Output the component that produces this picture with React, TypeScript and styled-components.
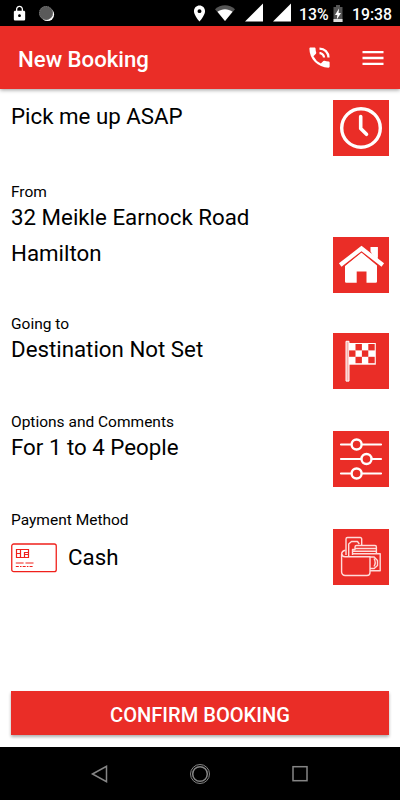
import React from 'react';
import styled, { createGlobalStyle } from 'styled-components';
import { MdLocationOn, MdLock, MdMenu, MdPhoneInTalk } from 'react-icons/md';

const RED = '#ea2d27';

const GlobalStyle = createGlobalStyle`
  * { box-sizing: border-box; }
  body { margin: 0; background: #fff; font-family: Roboto, sans-serif; color: #000; }
  svg { display: block; flex: none; }
`;

const Screen = styled.div`
  width: 400px;
  height: 800px;
  display: flex;
  flex-direction: column;
  overflow: hidden;
`;

const StatusBar = styled.header`
  height: 26px;
  flex: none;
  background: #000;
  color: #fff;
  display: flex;
  align-items: center;
  justify-content: space-between;
  padding: 0 9px 0 11px;
`;

const StatusGroup = styled.div`
  display: flex;
  align-items: center;
`;

const StatusItem = styled.span<{ $gap?: number }>`
  display: flex;
  margin-left: ${(p) => p.$gap ?? 0}px;
`;

const StatusText = styled.span<{ $gap: number; $width: number; $size: number }>`
  margin-left: ${(p) => p.$gap}px;
  width: ${(p) => p.$width}px;
  font-size: ${(p) => p.$size}px;
  line-height: 27px;
  height: 24px;
  font-weight: 500;
  white-space: nowrap;
`;

const AppBar = styled.nav`
  height: 63px;
  flex: none;
  background: ${RED};
  color: #fff;
  display: flex;
  align-items: center;
  padding: 0 13px 0 18px;
  box-shadow: 0 1px 4px rgba(0, 0, 0, 0.4);
`;

const Title = styled.h1`
  flex: 1;
  margin: 3px 0 0;
  font-size: 22.2px;
  font-weight: 500;
  line-height: 26px;
`;

const BarButton = styled.button<{ $gap?: number }>`
  border: 0;
  padding: 0;
  margin-left: ${(p) => p.$gap ?? 0}px;
  background: none;
  color: inherit;
  display: flex;
`;

const Main = styled.main`
  flex: 1;
  display: flex;
  flex-direction: column;
  padding: 11px 11px 12px;
`;

const Section = styled.section<{ $height: number; $gap?: number }>`
  height: ${(p) => p.$height}px;
  margin-top: ${(p) => p.$gap ?? 0}px;
  flex: none;
  display: flex;
  align-items: flex-end;
  justify-content: space-between;
`;

const Details = styled.div`
  align-self: stretch;
  display: flex;
  flex-direction: column;
`;

const Label = styled.span`
  font-size: 15.5px;
  line-height: 19px;
  margin-bottom: -2px;
`;

const Value = styled.span`
  font-size: 22.3px;
  line-height: 35.6px;
  white-space: nowrap;
`;

const AsapValue = styled(Value)`
  line-height: 33px;
`;

const Payment = styled.div`
  display: flex;
  align-items: center;
  gap: 11px;
  margin-top: 12px;
`;

const Tile = styled.button`
  width: 56px;
  height: 56px;
  border: 0;
  padding: 0;
  background: ${RED};
  color: #fff;
`;

const Confirm = styled.button`
  margin-top: auto;
  height: 44px;
  flex: none;
  border: 0;
  background: ${RED};
  color: #fff;
  font: 500 20.1px/24px Roboto, sans-serif;
  padding: 3px 0 0;
  box-shadow: 0 2px 3px rgba(0, 0, 0, 0.32);
`;

const NavBar = styled.footer`
  height: 53px;
  flex: none;
  background: #000;
  display: flex;
  align-items: center;
  justify-content: center;
  gap: 78px;
`;

const SyncDot = () => (
  <svg width="17" height="17" viewBox="0 0 17 17">
    <circle cx="9.5" cy="9.5" r="6.6" fill="#fff" />
    <circle cx="8" cy="8" r="7" fill="#5a5a5a" />
    <circle cx="8" cy="8" r="6.5" fill="none" stroke="#777" strokeWidth="1" strokeDasharray="1 1" />
  </svg>
);

const Wifi = () => (
  <svg width="20" height="16" viewBox="0 0 20 16">
    <path d="M0 4.2C5.4-1.2 14.6-1.2 20 4.2L10 16Z" fill="#555" />
    <path d="M2.5 6.7C6.8 3.3 13.2 3.3 17.5 6.7L10 16Z" fill="#fff" />
  </svg>
);

const Signal = () => (
  <svg width="18" height="20" viewBox="0 0 18 20">
    <path d="M0 18.5 18 .5V18.5Z" fill="#fff" />
  </svg>
);

const Battery = () => (
  <svg width="10" height="17" viewBox="0 0 10 17">
    <path d="M3 0h4v2h2.5v15H.5V2H3Z" fill="#555" />
    <path d="M.5 14h9v3h-9Z" fill="#ddd" />
    <path d="M6 3.5 2 10h2.3l-.5 4.5L8 8H5.6Z" fill="#fff" />
  </svg>
);

const Clock = () => (
  <svg width="56" height="56" viewBox="0 0 56 56" fill="none" stroke="#fff" strokeLinecap="round" strokeLinejoin="round">
    <circle cx="28" cy="28" r="19.3" strokeWidth="3.4" />
    <path d="M27.7 16.5V28.5L33.5 34.3" strokeWidth="3.6" />
  </svg>
);

const House = () => (
  <svg width="56" height="56" viewBox="0 0 56 56" fill="none">
    <path d="M12 29 28.5 15.5 44 28.5V44.5a1.3 1.3 0 0 1-1.3 1.3H33.5V34.5H23.7V45.8H13.3A1.3 1.3 0 0 1 12 44.5Z" fill="#fff" />
    <path d="M37.5 10H44.7V24L37.5 18Z" fill="#fff" />
    <path d="M7.5 28.2 28.5 11.5 49.5 28.2" stroke={RED} strokeWidth="6" />
    <path d="M7.2 28 28.5 11.5 49.8 28" stroke="#fff" strokeWidth="4.2" />
    <path d="M38.5 10H44.7V22.5L38.5 17Z" fill="#fff" />
  </svg>
);

const FLAG_CELLS = [[22.5, 11], [35.3, 11], [16.1, 17.4], [28.9, 17.4], [22.5, 23.8], [35.3, 23.8]];

const Flag = () => (
  <svg width="56" height="56" viewBox="0 0 56 56">
    <path d="M13 8.3h3v39.8h-3Z" fill="#f8b1ae" stroke="#fff" strokeWidth="1" />
    <path d="M16 10h26.8v21.7H16Z" fill="#fff" />
    {FLAG_CELLS.map(([x, y]) => (
      <rect key={`${x}-${y}`} x={x} y={y} width="6.4" height="6.4" fill={RED} />
    ))}
  </svg>
);

const Sliders = () => (
  <svg width="56" height="56" viewBox="0 0 56 56" stroke="#fff" fill={RED} strokeLinecap="round">
    <path d="M8 13.5H48M8 28H48M8 42.5H48" strokeWidth="2.2" />
    <circle cx="23.6" cy="13.5" r="5" strokeWidth="2.4" />
    <circle cx="33.5" cy="28" r="5" strokeWidth="2.4" />
    <circle cx="23.6" cy="42.5" r="5" strokeWidth="2.4" />
  </svg>
);

const Wallet = () => (
  <svg width="56" height="56" viewBox="0 0 56 56" fill="none" stroke="#ffdcda" strokeWidth="1.4" strokeLinejoin="round">
    <path d="M13 26V10a1.5 1.5 0 0 1 1.5-1.5h12.7A1.5 1.5 0 0 1 28.7 10V16" />
    <path d="M15.7 27V15l2.8-2.5h6l1.8 2.5" />
    <path d="M19.5 26V20.5H22V18a1.5 1.5 0 0 1 1.5-1.5H42a1.4 1.4 0 0 1 1.4 1.4V24.5M22 19.5H43M20 22.2H43M19 24.8H47.2V41.8H37" />
    <path d="M12.5 21.2c-2.4.4-3.9 1.8-3.9 4.3V43a3.5 3.5 0 0 0 3.5 3.5H34a3 3 0 0 0 3-3V27.7H12.2a3.3 3.3 0 0 1-3.4-3" />
    <path d="M37 28h4.2l3.3 3.4v5L41.2 39.5H37M41 29.5c1.5 2.5 1.5 5.5 0 8" />
  </svg>
);

const Card = () => (
  <svg width="46" height="30" viewBox="0 0 46 30" fill="none" stroke="#f0201b">
    <rect x=".75" y="1" width="44.5" height="27.7" rx="2" strokeWidth="1.3" />
    <path d="M5.5 6.5H17.5V14.5H5.5ZM9.5 6.5V14.5M5.2 10.5H9.5M13.5 14.5V9.5H17.8M9.5 6.5V14.5M13.8 11.5H17.8" strokeWidth="1.2" />
    <path d="M4.8 20H12.6M14.5 20H22.5" strokeWidth="1" />
    <path d="M4.8 23.5H22.5" strokeWidth="1" strokeDasharray="3 1.2 1.5 1.2" />
  </svg>
);

const NavIcon = styled.svg`
  fill: none;
  stroke: #858585;
  stroke-width: 1.5;
`;

export default function App() {
  return (
    <Screen>
      <GlobalStyle />
      <StatusBar>
        <StatusGroup>
          <MdLock size={17} />
          <StatusItem $gap={10}><SyncDot /></StatusItem>
        </StatusGroup>
        <StatusGroup>
          <MdLocationOn size={19} />
          <StatusItem $gap={6}><Wifi /></StatusItem>
          <StatusItem $gap={10}><Signal /></StatusItem>
          <StatusItem $gap={10}><Signal /></StatusItem>
          <StatusText $gap={8} $width={34} $size={15.8}>13%</StatusText>
          <Battery />
          <StatusText $gap={9} $width={39} $size={15.8}>19:38</StatusText>
        </StatusGroup>
      </StatusBar>
      <AppBar>
        <Title>New Booking</Title>
        <BarButton aria-label="Call"><MdPhoneInTalk size={27} /></BarButton>
        <BarButton $gap={26} aria-label="Menu"><MdMenu size={28} /></BarButton>
      </AppBar>
      <Main>
        <Section $height={56}>
          <Details><AsapValue>Pick me up ASAP</AsapValue></Details>
          <Tile aria-label="Time"><Clock /></Tile>
        </Section>
        <Section $height={110} $gap={27}>
          <Details>
            <Label>From</Label>
            <Value>32 Meikle Earnock Road</Value>
            <Value>Hamilton</Value>
          </Details>
          <Tile aria-label="Pickup address"><House /></Tile>
        </Section>
        <Section $height={74} $gap={22}>
          <Details>
            <Label>Going to</Label>
            <Value>Destination Not Set</Value>
          </Details>
          <Tile aria-label="Destination"><Flag /></Tile>
        </Section>
        <Section $height={74} $gap={24}>
          <Details>
            <Label>Options and Comments</Label>
            <Value>For 1 to 4 People</Value>
          </Details>
          <Tile aria-label="Options"><Sliders /></Tile>
        </Section>
        <Section $height={74} $gap={24}>
          <Details>
            <Label>Payment Method</Label>
            <Payment>
              <Card />
              <Value>Cash</Value>
            </Payment>
          </Details>
          <Tile aria-label="Payment"><Wallet /></Tile>
        </Section>
        <Confirm>CONFIRM BOOKING</Confirm>
      </Main>
      <NavBar>
        <NavIcon width="22" height="22" viewBox="0 0 22 22"><path d="M3.5 11 17.5 3.3V18.7Z" /></NavIcon>
        <NavIcon width="22" height="22" viewBox="0 0 22 22">
          <circle cx="11" cy="11" r="9.5" strokeWidth="1" />
          <circle cx="11" cy="11" r="7.3" />
        </NavIcon>
        <NavIcon width="22" height="22" viewBox="0 0 22 22"><rect x="4" y="3.7" width="14" height="14" /></NavIcon>
      </NavBar>
    </Screen>
  );
}
